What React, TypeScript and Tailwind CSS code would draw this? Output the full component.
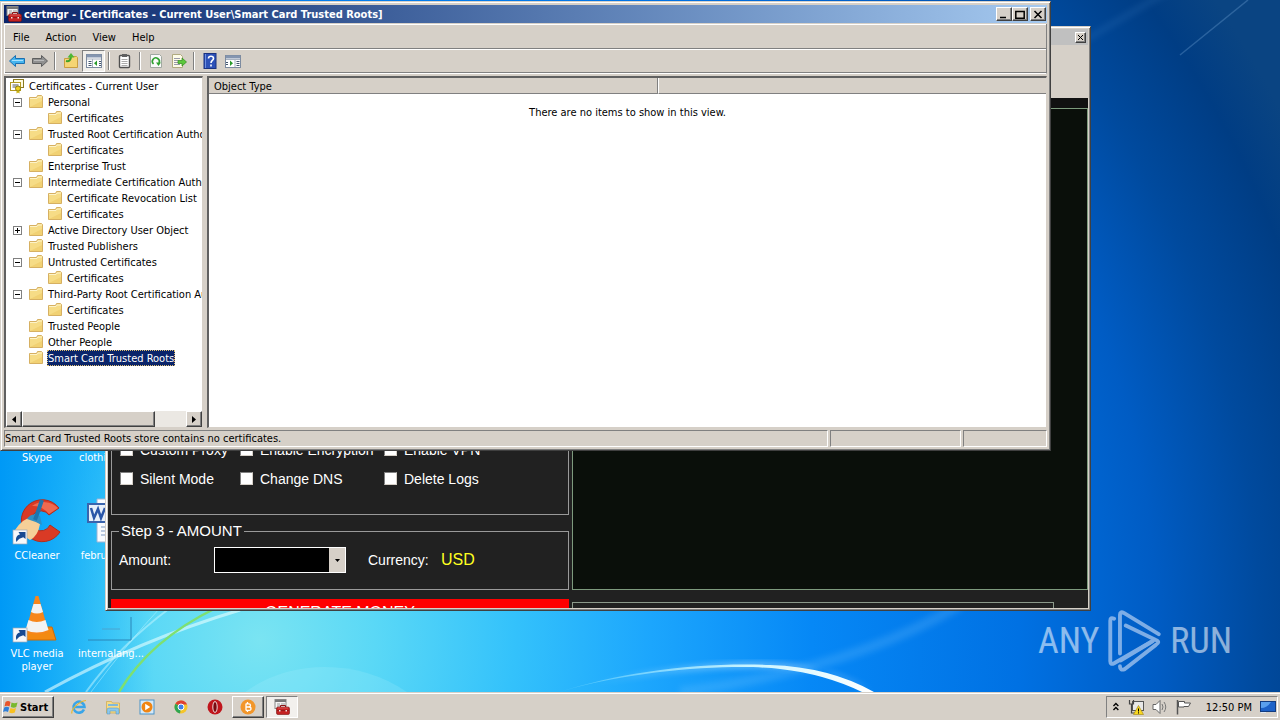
import { ReactNode, useState } from 'react';

const raised =
    'bg-[#d6d0c8] border border-t-white border-l-white border-r-[#404040] border-b-[#404040] shadow-[inset_-1px_-1px_0_#808080]';
const windowFrame =
    'bg-[#d6d0c8] border border-t-[#d6d0c8] border-l-[#d6d0c8] border-r-[#404040] border-b-[#404040] shadow-[inset_1px_1px_0_#fff,inset_-1px_-1px_0_#808080]';
const sunken = 'border border-t-[#808080] border-l-[#808080] border-r-white border-b-white';

type TreeNode = { label: string; level: number; state?: 'open' | 'closed' };

const treeNodes: TreeNode[] = [
    { label: 'Personal', level: 1, state: 'open' },
    { label: 'Certificates', level: 2 },
    { label: 'Trusted Root Certification Authorities', level: 1, state: 'open' },
    { label: 'Certificates', level: 2 },
    { label: 'Enterprise Trust', level: 1 },
    { label: 'Intermediate Certification Authorities', level: 1, state: 'open' },
    { label: 'Certificate Revocation List', level: 2 },
    { label: 'Certificates', level: 2 },
    { label: 'Active Directory User Object', level: 1, state: 'closed' },
    { label: 'Trusted Publishers', level: 1 },
    { label: 'Untrusted Certificates', level: 1, state: 'open' },
    { label: 'Certificates', level: 2 },
    { label: 'Third-Party Root Certification Authorities', level: 1, state: 'open' },
    { label: 'Certificates', level: 2 },
    { label: 'Trusted People', level: 1 },
    { label: 'Other People', level: 1 },
    { label: 'Smart Card Trusted Roots', level: 1 },
];

const Icon = ({ children, size = 'size-4' }: { children: ReactNode; size?: string }) => (
    <svg viewBox="0 0 16 16" className={`${size} shrink-0`} aria-hidden="true">
        {children}
    </svg>
);

const FolderIcon = () => (
    <Icon>
        <path d="M.5 3.500h7l1-2h4l1 1v11H.5z" fill="#f6dc86" stroke="#d6b062" />
        <path d="M1 4.500h7l1-1.500h4" fill="none" stroke="#fdf3c8" />
        <path d="M1 13h12V7z" fill="#efc968" opacity=".6" />
    </Icon>
);

const CertRootIcon = () => (
    <Icon>
        <rect x="4.500" y="1.500" width="10" height="8" fill="#fffbe0" stroke="#8a7a20" />
        <rect x="1.500" y="4.500" width="10" height="8" fill="#fff" stroke="#b49a20" />
        <path d="M3.500 7h6M3.500 9h4" stroke="#555" />
        <circle cx="9" cy="10.500" r="2.500" fill="#f0d020" stroke="#8a7a10" />
        <path d="M7.500 12.500v3l1.500-1 1.500 1v-3" fill="#c8b010" />
    </Icon>
);

const ToolboxIcon = () => (
    <Icon>
        <rect x="1" y="0.500" width="11" height="9" fill="#f4f4f4" stroke="#888" />
        <path d="M1 2h11" stroke="#777" strokeWidth="2" />
        <path d="M3 5h3M7 5h4M3 7h3" stroke="#999" />
        <path d="M6.500 8V6.500h5V8" fill="none" stroke="#8a1515" />
        <rect x="2.500" y="8" width="13" height="7.500" rx="1.500" fill="#c42222" stroke="#7c1010" strokeWidth=".6" />
        <path d="M3 11.500h12" stroke="#8a1515" strokeWidth=".8" />
        <path d="M4 9h10" stroke="#e86a6a" strokeWidth=".8" />
        <rect x="5" y="11" width="1.500" height="1.500" fill="#f4dede" />
        <rect x="11.500" y="11" width="1.500" height="1.500" fill="#f4dede" />
    </Icon>
);

const ShortcutArrow = () => (
    <g>
        <rect x="0" y="33" width="14" height="14" fill="#f6f8fa" stroke="#9aa7b5" strokeWidth=".7" />
        <path d="M3.500 45c-1.500-4 .5-7 3.500-7.500l-1.500-2.500h7v7l-2.200-1.800C7.500 41 5 42 3.500 45z" fill="#174a92" />
    </g>
);

const Wallpaper = () => (
    <svg className="absolute inset-0 size-full" viewBox="0 0 1280 692" preserveAspectRatio="none" aria-hidden="true">
        <defs>
            <radialGradient id="sky" gradientUnits="userSpaceOnUse" cx="260" cy="640" r="1150">
                <stop offset="0" stopColor="#7ae4f2" />
                <stop offset=".1" stopColor="#5ad8f6" />
                <stop offset=".22" stopColor="#34c2fb" />
                <stop offset=".34" stopColor="#1ca6fd" />
                <stop offset=".48" stopColor="#0688f6" />
                <stop offset=".66" stopColor="#0071e3" />
                <stop offset=".78" stopColor="#005cc4" />
                <stop offset=".87" stopColor="#004a9e" />
                <stop offset=".95" stopColor="#003d84" />
                <stop offset="1" stopColor="#0a4482" />
            </radialGradient>
            <linearGradient id="edge" x1="0" y1="0" x2="1" y2="0">
                <stop offset="0" stopColor="#0099f6" />
                <stop offset=".12" stopColor="#00a6f8" stopOpacity="0" />
            </linearGradient>
            <linearGradient id="arc" x1="0" y1="0" x2="1" y2="0">
                <stop offset="0" stopColor="#8fe6ff" stopOpacity=".3" />
                <stop offset=".6" stopColor="#c8f4ff" />
                <stop offset="1" stopColor="#fff" />
            </linearGradient>
            <filter id="soft">
                <feGaussianBlur stdDeviation="3" />
            </filter>
        </defs>
        <rect width="1280" height="692" fill="url(#sky)" />
        <rect width="1280" height="692" fill="url(#edge)" />
        <path d="M680 692Q850 670 960 605" stroke="#8cd0ff" strokeWidth="10" opacity=".2" fill="none" filter="url(#soft)" />
        <path d="M1085 40L1170-10" stroke="#5c9ad8" strokeWidth="6" opacity=".15" filter="url(#soft)" />
        <path d="M1180 55L1248 0" stroke="#7fb0e0" strokeWidth="1.500" opacity=".3" />
        <path d="M560 692C680 660 790 655 830 674q25 8 42 18q-34-24-80-24C700 664 620 676 560 692z" fill="#fff" opacity=".5" filter="url(#soft)" />
        <path d="M560 692C640 668 740 664 780 669Q825 674 862 692H874Q830 667 770 665C700 662 620 672 560 692z" fill="url(#arc)" />
        <path d="M45 692Q140 640 240 610" stroke="#e8ffff" strokeWidth="3" opacity=".6" fill="none" />
        <path d="M86 692Q120 645 170 608" stroke="#c8f8ff" strokeWidth="2" opacity=".5" fill="none" />
        <path d="M91 692Q130 640 160 608" stroke="#b8f4ff" strokeWidth="1" opacity=".5" fill="none" />
        <path d="M119 692Q150 640 216 608" stroke="#7ee070" strokeWidth="2.500" fill="none" />
        <path d="M245 692q35-25 80-25t82 25z" fill="#b8f4ff" opacity=".18" />
    </svg>
);

const CCleanerIcon = () => (
    <svg viewBox="0 0 48 48" className="size-12 overflow-visible" aria-hidden="true">
        <path d="M46 11A21 21 0 1 0 47 35L37 28A10 10 0 1 1 36 18z" fill="#d93a25" stroke="#b52c1a" />
        <path d="M45 11A20 20 0 0 0 19 9Q28 8 36 17z" fill="#ee6a50" />
        <path d="M2 33q8-12 16-12l9 6q-2 12-10 16z" fill="#f5cf98" />
        <path d="M14 22q5-7 13-3l2 9q-8-4-15-6z" fill="#2f8fc4" />
        <path d="M29 3L22 23" stroke="#1f74ac" strokeWidth="4" />
        <ShortcutArrow />
    </svg>
);

const VlcIcon = () => (
    <svg viewBox="0 0 48 48" className="size-12 overflow-visible" aria-hidden="true">
        <path d="M14 32h25l4 13H10z" fill="#f38a12" stroke="#cf6b05" />
        <path d="M22.500 1h3l10 36q-12 5-23 0z" fill="#f7861b" />
        <path d="M20.500 9h7l2.500 8q-6 3-12 0z" fill="#f2f2f2" />
        <path d="M15.500 25q8 4 17 0l3 10q-12 5-23 0z" fill="#f2f2f2" />
        <ShortcutArrow />
    </svg>
);

const WordIcon = () => (
    <svg viewBox="0 0 48 48" className="size-12 overflow-visible" aria-hidden="true">
        <path d="M10 2h30v43H10z" fill="#fafcff" stroke="#9db4d4" />
        <path d="M14 30h22M14 34h22M14 38h22" stroke="#7b97c0" />
        <rect x="1" y="7" width="20" height="18" fill="#e7effa" stroke="#3a64ad" strokeWidth="2" />
        <path d="M4 11l3 10 4-9 3 9 4-10" fill="none" stroke="#2a56a8" strokeWidth="2.500" />
    </svg>
);

const GhostIcon = () => (
    <svg viewBox="0 0 48 48" className="size-12 overflow-visible" aria-hidden="true">
        <path d="M1 45h43V22" fill="none" stroke="#2a86b8" />
        <path d="M15 34h18" stroke="#4aa4d0" />
    </svg>
);

const desktopItems: { label: string; place: string; icon?: ReactNode }[] = [
    { label: 'Skype', place: 'row-start-5 col-start-1' },
    { label: 'clothingvid...', place: 'row-start-5 col-start-2' },
    { label: 'CCleaner', place: 'row-start-6 col-start-1', icon: <CCleanerIcon /> },
    { label: 'februaryin...', place: 'row-start-6 col-start-2', icon: <WordIcon /> },
    { label: 'VLC media player', place: 'row-start-7 col-start-1', icon: <VlcIcon /> },
    { label: 'internalang...', place: 'row-start-7 col-start-2', icon: <GhostIcon /> },
];

const DesktopIcons = () => (
    <div className="relative grid w-[148px] auto-rows-[98px] grid-cols-2 pt-[7px]">
        {desktopItems.map((item) => (
            <div key={item.label} className={`flex flex-col items-center ${item.place}`}>
                <div className="h-[52px]">{item.icon}</div>
                <span className="w-[72px] text-center leading-[13px] text-white">{item.label}</span>
            </div>
        ))}
    </div>
);

const options = ['Custom Proxy', 'Enable Encryption', 'Enable VPN', 'Silent Mode', 'Change DNS', 'Delete Logs'];

const GeneratorWindow = () => (
    <div className={`absolute top-[26px] right-[189px] bottom-[81px] left-[105px] flex flex-col p-[2px] ${windowFrame}`}>
        <div className="flex h-4 items-center justify-end bg-[#c0c0c0] pr-[2px]">
            <button aria-label="Close" className={`flex size-[11px] items-center justify-center ${raised}`}>
                <svg viewBox="0 0 7 7" className="size-[7px]">
                    <path d="M1 1l5 5M6 1L1 6" stroke="#000" />
                </svg>
            </button>
        </div>
        <div className="h-[53px]" />
        <div className="flex min-h-0 flex-1 gap-[3px] overflow-hidden bg-[#212121] font-['Liberation_Sans',sans-serif] text-[15px] leading-5 text-white">
            <div className="flex w-[461px] shrink-0 flex-col pl-[3px]">
                <div className="flex min-h-0 flex-1 flex-col justify-end border border-[#9a9a9a] pb-[21px] pl-2">
                    <div className="grid grid-cols-[120px_144px_auto]">
                        {options.map((option) => (
                            <label key={option} className="flex h-[29px] items-center gap-[7px] text-[14px] whitespace-nowrap">
                                <input
                                    type="checkbox"
                                    className="size-[13px] appearance-none border border-t-[#808080] border-r-[#d6d0c8] border-b-[#d6d0c8] border-l-[#808080] bg-white"
                                />
                                {option}
                            </label>
                        ))}
                    </div>
                </div>
                <fieldset className="mt-[6px] h-[69px] shrink-0 border border-[#9a9a9a] pl-[7px]">
                    <legend className="h-5 px-[2px]">Step 3 - AMOUNT</legend>
                    <div className="flex items-center pt-[6px]">
                        <label htmlFor="amount" className="w-[95px] text-[14px]">
                            Amount:
                        </label>
                        <div className="relative flex">
                            <select id="amount" className="h-[26px] w-[132px] appearance-none border border-white bg-black" />
                            <span className="pointer-events-none absolute inset-y-px right-px flex w-4 items-center justify-center bg-[#d6d0c8]">
                                <svg viewBox="0 0 5 3" className="h-[3px] w-[5px]">
                                    <path d="M0 0h5L2.500 3z" fill="#000" />
                                </svg>
                            </span>
                        </div>
                        <span className="ml-[22px] w-[73px] text-[14px]">Currency:</span>
                        <span className="text-base text-[#ffff20]">USD</span>
                    </div>
                </fieldset>
                <div className="mt-[9px] h-[9px] shrink-0">
                    <button className="h-[28px] w-full bg-[#ff0000] text-base">GENERATE MONEY</button>
                </div>
            </div>
            <div className="flex min-w-0 flex-1 flex-col bg-[#212121] pt-[10px] shadow-[inset_0_10px_0_#111]">
                <div className="min-h-0 flex-1 border border-[#7d9a7d] bg-[#0a0f0a]" />
                <div className="mt-3 flex h-[6px] shrink-0 gap-[2px]">
                    <div className="h-5 flex-1 border border-[#8c9a8c]" />
                    <span className="h-5 w-[32px] pt-px text-[#ffff20]">0%</span>
                </div>
            </div>
        </div>
    </div>
);

const Tool = ({ label, active, children }: { label: string; active?: boolean; children: ReactNode }) => (
    <button
        aria-label={label}
        className={`flex h-[22px] w-[23px] items-center justify-center ${active ? `bg-[#f0eeea] ${sunken}` : ''}`}
    >
        <Icon>{children}</Icon>
    </button>
);

const Separator = () => (
    <span className="flex h-[18px] w-2 justify-center">
        <span className="w-[2px] border-r border-l border-r-white border-l-[#808080]" />
    </span>
);

const Toolbar = () => (
    <div className="flex h-[24px] items-center border-t border-b border-t-white border-b-[#808080]">
        <Tool label="Back">
            <path d="M.5 8l6-5.500v3h9v5h-9v3z" fill="#45b4ee" stroke="#1c6fb0" />
            <path d="M3 7.500h11" stroke="#a8e2ff" />
        </Tool>
        <Tool label="Forward">
            <path d="M15.500 8l-6-5.500v3h-9v5h9v3z" fill="#909090" stroke="#5e5e5e" />
            <path d="M2 7.500h10" stroke="#bbb" />
        </Tool>
        <Separator />
        <Tool label="Up one level">
            <path d="M1.500 5.500h5l1-2h6l1 1v10h-13z" fill="#f5d574" stroke="#c99e42" />
            <path d="M3 8q5 1 5-5" fill="none" stroke="#3fa32a" strokeWidth="2" />
            <path d="M4.500 4.500L8 0l3.500 4.500z" fill="#4cb834" />
        </Tool>
        <Tool label="Show/Hide Console Tree" active>
            <rect x=".5" y="1.500" width="15" height="13" fill="#fff" stroke="#7d8ba0" />
            <path d="M1 3h14" stroke="#8495b0" strokeWidth="3" />
            <path d="M1 6h14M6.500 6v8" stroke="#a8b2c0" />
            <path d="M2.500 8.500h3M2.500 10.500h3M2.500 12.500h3M13 8.500h2M13 10.500h2M13 12.500h2" stroke="#44566e" />
            <path d="M11 7.500v5.500L8 10.200z" fill="#2a9a2a" />
        </Tool>
        <Separator />
        <Tool label="Properties">
            <rect x="2.500" y="2.500" width="10" height="12" rx="1" fill="#fff" stroke="#505050" strokeWidth="1.400" />
            <rect x="5" y="1" width="5" height="3" fill="#606060" />
            <path d="M4.500 6.500h6M4.500 8.500h6M4.500 10.500h6M4.500 12.500h6" stroke="#aaa" />
        </Tool>
        <Separator />
        <Tool label="Refresh">
            <path d="M2.500 1.500h9l2 2v11h-11z" fill="#fafafa" stroke="#a0a8a0" />
            <path d="M5.500 11A3.500 3.500 0 1 1 11 10" fill="none" stroke="#2da02d" strokeWidth="1.600" />
            <path d="M8 9.500h5L10.500 13z" fill="#2da02d" />
        </Tool>
        <Tool label="Export List">
            <path d="M1.500 1.500h8l2 2v11h-10z" fill="#fdfbe8" stroke="#b0aa80" />
            <path d="M3 5.500h6M3 7.500h4M3 9.500h4M3 11.500h6" stroke="#99a" />
            <path d="M7 7.500h4V5l4.500 4-4.500 4v-2.500H7z" fill="#5cc83c" stroke="#2f8a1c" strokeWidth=".7" />
        </Tool>
        <Separator />
        <Tool label="Help">
            <rect x="2" y=".5" width="12" height="15" fill="#2d51b8" stroke="#1b3280" />
            <path d="M3.500 1v14" stroke="#6f8fe0" />
            <path d="M6.500 5.500c0-3 5-3 5 0 0 2-2.500 2-2.500 4.500M9 11.500v2" fill="none" stroke="#fff" strokeWidth="1.600" />
        </Tool>
        <Tool label="Show/Hide Action Pane">
            <rect x=".5" y="2.500" width="15" height="12" fill="#fff" stroke="#7d8ba0" />
            <path d="M1 4h14" stroke="#8495b0" strokeWidth="3" />
            <path d="M1 6.500h14M10 6v8" stroke="#a8b2c0" />
            <path d="M11.500 8.500h3M11.500 10.500h3M11.500 12.500h3M1 9.500h2M1 11.500h2" stroke="#44566e" />
            <path d="M5 7.500v5.500l3-2.700z" fill="#2a9a2a" />
        </Tool>
    </div>
);

const Expander = ({ state }: { state?: 'open' | 'closed' }) => (
    <span className="w-[23px] shrink-0 pl-[7px]">
        {state && (
            <svg viewBox="0 0 9 9" className="size-[9px]" aria-hidden="true">
                <rect x=".5" y=".5" width="8" height="8" fill="#fff" stroke="#808080" />
                <path d={state === 'open' ? 'M2 4.500h5' : 'M2 4.500h5M4.500 2v5'} stroke="#000" />
            </svg>
        )}
    </span>
);

const Tree = () => {
    const [selected, setSelected] = useState(16);

    return (
        <div className="flex w-[199px] shrink-0 flex-col border-t-2 border-r border-b border-l-2 border-t-[#606060] border-r-[#d6d0c8] border-b-[#d6d0c8] border-l-[#606060] bg-white">
            <ul className="min-h-0 flex-1 overflow-hidden">
                <li className="flex h-4 items-center gap-1 pl-[3px]">
                    <CertRootIcon />
                    Certificates - Current User
                </li>
                {treeNodes.map((node, index) => (
                    <li key={index} className={`flex h-4 items-center ${node.level === 2 ? 'pl-[19px]' : ''}`}>
                        <Expander state={node.state} />
                        <FolderIcon />
                        <button
                            onClick={() => setSelected(index)}
                            className={`ml-[2px] h-4 border whitespace-nowrap ${
                                selected === index
                                    ? 'border-dotted border-[#e0c070] bg-[#0a246a] text-white'
                                    : 'border-transparent'
                            }`}
                        >
                            {node.label}
                        </button>
                    </li>
                ))}
            </ul>
            <div className="flex h-4 bg-[#ebe8e3]">
                <button aria-label="Scroll left" className={`flex w-4 items-center justify-center ${raised}`}>
                    <svg viewBox="0 0 4 7" className="h-[7px] w-1">
                        <path d="M4 0v7L0 3.500z" />
                    </svg>
                </button>
                <div className="flex-1">
                    <div className={`h-4 w-[133px] ${raised}`} />
                </div>
                <button aria-label="Scroll right" className={`flex w-4 items-center justify-center ${raised}`}>
                    <svg viewBox="0 0 4 7" className="h-[7px] w-1">
                        <path d="M0 0v7l4-3.500z" />
                    </svg>
                </button>
            </div>
        </div>
    );
};

const CaptionButton = ({ label, path }: { label: string; path: string }) => (
    <button aria-label={label} className={`flex h-[14px] w-4 items-center justify-center ${raised}`}>
        <svg viewBox="0 0 10 9" className="h-[9px] w-[10px]">
            <path d={path} fill="none" stroke="#000" strokeWidth="1.500" />
        </svg>
    </button>
);

const CertmgrWindow = () => (
    <div className={`absolute top-px right-[229px] bottom-[241px] left-0 flex flex-col p-[3px] ${windowFrame}`}>
        <div className="flex h-[18px] shrink-0 items-center bg-linear-to-r from-[#0a246a] to-[#a6caf0] pr-px pl-[2px]">
            <ToolboxIcon />
            <h1 className="flex-1 pl-[2px] font-bold text-white">certmgr - [Certificates - Current User\Smart Card Trusted Roots]</h1>
            <CaptionButton label="Minimize" path="M1 7.500h6" />
            <CaptionButton label="Maximize" path="M.8 1.500h8.400M.8.800v7.400h8.400V.8" />
            <span className="w-[2px]" />
            <CaptionButton label="Close" path="M1.500 1l7 7M8.500 1l-7 7" />
        </div>
        <div className="mt-px shrink-0 border-r border-b border-l border-r-[#808080] border-b-white border-l-white">
            <nav className="flex h-[25px] items-center border-t border-b border-t-white border-b-[#808080] pt-px">
                <button className="px-2">File</button>
                <button className="px-2">Action</button>
                <button className="px-2">View</button>
                <button className="px-2">Help</button>
            </nav>
            <Toolbar />
        </div>
        <div className="mt-[2px] flex min-h-0 flex-1 gap-1">
            <Tree />
            <div className="flex-1 border-t-2 border-r border-b border-l-2 border-t-[#606060] border-r-[#d6d0c8] border-b-[#d6d0c8] border-l-[#606060] bg-white">
                <table className="w-full border-separate border-spacing-0">
                    <thead>
                        <tr className="bg-[#d6d0c8]">
                            <th className="h-4 w-[449px] border-r border-b border-[#808080] pt-px pl-[5px] text-left font-normal">
                                Object Type
                            </th>
                            <th className="border-b border-l border-b-[#808080] border-l-white" />
                        </tr>
                    </thead>
                    <tbody>
                        <tr>
                            <td colSpan={2} className="pt-3 text-center">
                                There are no items to show in this view.
                            </td>
                        </tr>
                    </tbody>
                </table>
            </div>
        </div>
        <div className="mt-[2px] flex h-[17px] shrink-0 gap-[2px]">
            <div className={`flex flex-1 items-center ${sunken}`}>Smart Card Trusted Roots store contains no certificates.</div>
            <div className={`w-[131px] ${sunken}`} />
            <div className={`w-[84px] ${sunken}`} />
        </div>
    </div>
);

const Watermark = () => (
    <div className="absolute right-[48px] bottom-5 flex h-[62px] items-center gap-2 font-['Roboto_Condensed','Open_Sans_Condensed','Liberation_Sans_Narrow','Liberation_Sans',sans-serif] text-[36px] text-white/55">
        <span>ANY</span>
        <svg viewBox="0 0 56 64" className="h-[62px] w-[55px] shrink-0" fill="none" stroke="#a8c8f0" strokeWidth="4" strokeLinecap="round" opacity=".75" aria-hidden="true">
            <path d="M7 9Q3 7 3 11v42q0 4 4 2L45 33" />
            <path d="M13 45V5q0-4 4-2L53 25" />
            <path d="M19 16L50 31q5 2 0 5L18 61q-5 2-5-3" />
            <path d="M14 52L47 32" />
        </svg>
        <span>RUN</span>
    </div>
);

const launchers: { label: string; icon: ReactNode }[] = [
    {
        label: 'Internet Explorer',
        icon: (
            <>
                <path d="M13 10.500A5.500 5.500 0 1 1 13.500 8H4" fill="none" stroke="#3aa5e8" strokeWidth="2.600" />
                <path d="M1 14.500C-.5 11 8 2 15 1.500" fill="none" stroke="#e8b830" strokeWidth="1.200" />
            </>
        ),
    },
    {
        label: 'Windows Explorer',
        icon: (
            <>
                <path d="M1.500 2.500h5l1 1.500h7v10h-13z" fill="#f5dc88" stroke="#cfa84a" strokeWidth=".7" />
                <path d="M3 6h10" stroke="#7fb8dc" strokeWidth="2" />
                <path d="M2 15v-4q0-2 2-2h8q2 0 2 2v4h-3v-3H5v3z" fill="#8cc8ec" stroke="#4f92c0" strokeWidth=".5" />
            </>
        ),
    },
    {
        label: 'Media Player',
        icon: (
            <>
                <rect x="1" y="1" width="14" height="14" fill="#d5e9f8" stroke="#4a93c8" />
                <circle cx="8" cy="8" r="5.500" fill="#f08512" />
                <path d="M6.200 4.800v6.400l5-3.200z" fill="#fff" />
            </>
        ),
    },
    {
        label: 'Chrome',
        icon: (
            <>
                <circle cx="8" cy="8" r="6.500" fill="#f5c52a" />
                <path d="M8 8L2.400 4.700A6.500 6.500 0 0 1 14 5.500H8z" fill="#de4032" />
                <path d="M8 8l-1 6.500A6.500 6.500 0 0 1 2.400 4.700z" fill="#2fa552" />
                <circle cx="8" cy="8" r="3" fill="#3f80e8" stroke="#fff" />
            </>
        ),
    },
    {
        label: 'Opera',
        icon: (
            <>
                <circle cx="8" cy="8" r="7.500" fill="#c0151c" />
                <ellipse cx="8" cy="8" rx="2.200" ry="5.500" fill="#7a0a10" stroke="#f0d8d8" />
            </>
        ),
    },
];

const Taskbar = () => (
    <footer className="flex h-7 shrink-0 items-center border-t border-[#d6d0c8] bg-[#d6d0c8] pt-px pl-[2px] shadow-[inset_0_1px_0_#fff]">
        <button className={`mr-2 flex h-[22px] w-[52px] items-center gap-px font-bold ${raised}`}>
            <Icon>
                <path d="M2.500 3Q5 1 7.500 3L6.500 7.500Q4 6 1.500 7.500z" fill="#e8542a" />
                <path d="M8.500 3.500q3 1.500 6 0l-1.200 4.500q-2.500 1.500-5.500 0z" fill="#78b82e" />
                <path d="M1.200 8.500q2.500-1.500 5 0L5 13Q2.500 11.500 0 13z" fill="#2f7fd8" />
                <path d="M7.500 9q3 1.500 5.500 0l-1.200 4.500q-3 1.500-5.600 0z" fill="#f8c020" />
            </Icon>
            Start
        </button>
        {launchers.map((item) => (
            <button key={item.label} aria-label={item.label} className="flex w-[34px] justify-center">
                <Icon>{item.icon}</Icon>
            </button>
        ))}
        <button aria-label="Bitcoin generator" className={`flex h-[22px] w-8 items-center justify-center ${raised}`}>
            <Icon>
                <circle cx="8" cy="8" r="7.500" fill="#f2962a" />
                <path d="M6 4.500v7M6 4.800h2.800q1.700 0 1.700 1.500T8.800 8H6h3q2 0 2 1.700T9 11.300H6M7.500 3v2M7.500 11v2" fill="none" stroke="#fff" strokeWidth="1.300" />
            </Icon>
        </button>
        <button aria-label="certmgr" className={`ml-[2px] flex h-[22px] w-8 items-center justify-center bg-[#f2f0ed] ${sunken}`}>
            <ToolboxIcon />
        </button>
        <div className={`mr-[2px] ml-auto flex h-[22px] w-[172px] items-center gap-2 pr-px pl-[5px] ${sunken}`}>
            <svg viewBox="0 0 8 10" className="h-[10px] w-2" aria-hidden="true">
                <path d="M1.500 4l2.500-2.500L6.500 4M1.500 8l2.500-2.500L6.500 8" fill="none" stroke="#000" strokeWidth="1.400" />
            </svg>
            <Icon>
                <rect x="4.500" y="2.500" width="11" height="9" fill="#e8e8e8" stroke="#555" />
                <path d="M1.500 1v4h4V1M3.500 5v9h4" fill="none" stroke="#444" strokeWidth="1.200" />
                <path d="M10.500 6.500l5 9h-10z" fill="#f8d820" stroke="#a08010" strokeWidth=".6" />
                <path d="M10.500 9.500v3M10.500 13.300v1.200" stroke="#000" />
            </Icon>
            <Icon>
                <path d="M1 5.500h3l4-4v13l-4-4H1z" fill="#fff" stroke="#666" />
                <path d="M10 5q2 3 0 6M12 3q3.500 5 0 10" fill="none" stroke="#777" />
            </Icon>
            <Icon>
                <path d="M1.500 1v14.500" stroke="#555" strokeWidth="1.500" />
                <path d="M2.500 2.500h6v1.500h6l-2 3.500H8V8H2.500z" fill="#fff" stroke="#555" />
            </Icon>
            <span className="flex-1 pl-[6px] whitespace-nowrap">12:50 PM</span>
            <Icon>
                <rect x=".5" y="2.500" width="15" height="10" fill="#1d62c8" stroke="#123c80" />
                <path d="M1 9q6 0 10-6H1z" fill="#5aa0ee" />
                <path d="M1 13.500h5" stroke="#dfe8f4" />
            </Icon>
        </div>
    </footer>
);

const App = () => (
    <div className="flex h-screen flex-col overflow-hidden font-['DejaVu_Sans_Condensed','DejaVu_Sans',sans-serif] text-[11px] leading-[13px] text-black">
        <main className="relative min-h-0 flex-1 overflow-hidden">
            <Wallpaper />
            <DesktopIcons />
            <GeneratorWindow />
            <CertmgrWindow />
            <Watermark />
        </main>
        <Taskbar />
    </div>
);

export default App;
